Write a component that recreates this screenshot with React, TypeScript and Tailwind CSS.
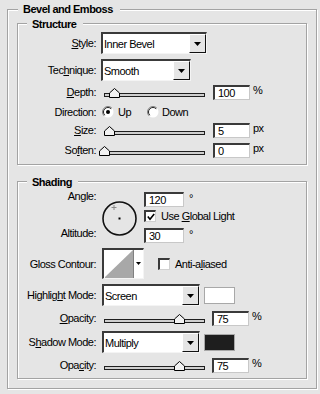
import React from "react";

const BG = "bg-[#e5e5e5]";
const SUNK =
  "border-t-2 border-l-2 border-b border-r border-t-[#3a3a3a] border-l-[#3a3a3a] border-b-[#f4f4f4] border-r-[#f4f4f4]";

function U({ children }: { children: React.ReactNode }) {
  return <span className="underline">{children}</span>;
}

function Group({
  title,
  className,
  titleClass,
  children,
}: {
  title: string;
  className: string;
  titleClass: string;
  children?: React.ReactNode;
}) {
  return (
    <div
      className={`border border-[#a3a3a3] shadow-[inset_1px_1px_0_#ffffff,1px_1px_0_#ffffff] ${className}`}
    >
      <div className={`w-fit ${BG} font-bold leading-[12px] ${titleClass}`}>{title}</div>
      {children}
    </div>
  );
}

function Label({ children }: { children: React.ReactNode }) {
  return <div className="w-[78px] shrink-0 text-right leading-[12px]">{children}</div>;
}

function Select({ value, w }: { value: string; w: string }) {
  return (
    <div className={`flex h-[22px] ${w} ${SUNK} bg-white shrink-0`}>
      <div className="flex-1 pl-[1px] flex items-center leading-[12px]">{value}</div>
      <div className="w-[17px] flex items-center justify-center bg-[#e5e5e5] border border-t-white border-l-white border-b-[#111111] border-r-[#111111]">
        <svg width="7" height="4" viewBox="0 0 7 4">
          <polygon points="0,0 7,0 3.5,4" fill="#000" />
        </svg>
      </div>
    </div>
  );
}

function Box({ v, w = "w-[37px]" }: { v: string; w?: string }) {
  return (
    <div
      className={`${w} h-[15px] shrink-0 bg-white border-t-2 border-l-2 border-b border-r border-t-[#3a3a3a] border-l-[#3a3a3a] border-b-[#c8c8c8] border-r-[#c8c8c8] pl-[3px] leading-[12px]`}
    >
      {v}
    </div>
  );
}

function Slider({ pos }: { pos: number }) {
  return (
    <div className="relative w-[101px] h-[10px] flex items-end shrink-0">
      <div className="w-full h-[4px] mb-[1px] border border-[#1e1e1e] bg-[#cfcfcf]" />
      <svg
        className="absolute top-0"
        style={{ left: pos - 5 }}
        width="11"
        height="10"
        viewBox="0 0 11 10"
      >
        <polygon points="5.5,0.5 10.5,5 10.5,9.5 0.5,9.5 0.5,5" fill="#f2f2f2" stroke="#000" />
      </svg>
    </div>
  );
}

function Radio({ on }: { on?: boolean }) {
  return (
    <svg width="12" height="12" viewBox="0 0 12 12" className="shrink-0">
      <circle cx="6" cy="6" r="5.5" fill="#fff" />
      <path d="M2.1 9.9 A5.5 5.5 0 0 1 9.9 2.1" stroke="#808080" fill="none" />
      <path d="M2.8 9.2 A4.5 4.5 0 0 1 9.2 2.8" stroke="#222" fill="none" />
      {on && <circle cx="6" cy="6" r="2" fill="#000" />}
    </svg>
  );
}

function Check({ on }: { on?: boolean }) {
  return (
    <div
      className={`w-[12px] h-[12px] shrink-0 bg-white border-t-2 border-l-2 border-b border-r border-t-[#3a3a3a] border-l-[#3a3a3a] border-b-[#d0d0d0] border-r-[#d0d0d0] flex items-center justify-center`}
    >
      {on && (
        <svg width="8" height="8" viewBox="0 0 8 8">
          <path d="M0.8 3.6 L3 6.2 L7.2 1" stroke="#000" strokeWidth="1.6" fill="none" />
        </svg>
      )}
    </div>
  );
}

function SliderRow({
  label,
  pos,
  v,
  unit,
  boxMl,
  className,
}: {
  label: React.ReactNode;
  pos: number;
  v: string;
  unit: string;
  boxMl: string;
  className: string;
}) {
  return (
    <div className={`flex items-center h-[16px] ${className}`}>
      <Label>{label}</Label>
      <div className="ml-[8px] mt-[2px]">
        <Slider pos={pos} />
      </div>
      <div className={boxMl}>
        <Box v={v} />
      </div>
      <span className="ml-[3px] leading-[12px] self-start">{unit}</span>
    </div>
  );
}

export default function App() {
  return (
    <div
      className={`w-[320px] h-[394px] overflow-hidden ${BG} pt-[9px] pl-[7px] font-['Liberation_Sans',Arial,sans-serif] text-[11px] tracking-[-0.5px] text-black`}
    >
      <Group
        title="Bevel and Emboss"
        className="w-[310px] h-[380px]"
        titleClass="-mt-[7px] ml-[10px] pl-[5px] pr-[7px]"
      >
        <Group
          title="Structure"
          className="ml-[9px] mt-[8px] w-[290px] h-[142px]"
          titleClass="-mt-[6px] ml-[9px] pl-[5px] pr-[7px]"
        >
          <div className="flex items-center mt-[2px] h-[22px]">
            <Label>
              <U>S</U>tyle:
            </Label>
            <div className="ml-[5px]">
              <Select value="Inner Bevel" w="w-[106px]" />
            </div>
          </div>
          <div className="flex items-center mt-[5px] h-[22px]">
            <Label>
              Tec<U>h</U>nique:
            </Label>
            <div className="ml-[5px]">
              <Select value="Smooth" w="w-[90px]" />
            </div>
          </div>
          <SliderRow
            className="mt-[3px]"
            label={
              <>
                <U>D</U>epth:
              </>
            }
            pos={10}
            v="100"
            unit="%"
            boxMl="ml-[8px]"
          />
          <div className="flex items-center mt-[4px] h-[16px]">
            <Label>Direction:</Label>
            <div className="ml-[6px] flex items-center">
              <Radio on />
              <span className="ml-[4px] leading-[12px] w-[29px]">Up</span>
              <Radio />
              <span className="ml-[3px] leading-[12px]">Down</span>
            </div>
          </div>
          <SliderRow
            className="mt-[2px]"
            label={
              <>
                <U>S</U>ize:
              </>
            }
            pos={5}
            v="5"
            unit="px"
            boxMl="ml-[8px]"
          />
          <SliderRow
            className="mt-[4px]"
            label={
              <>
                So<U>f</U>ten:
              </>
            }
            pos={0}
            v="0"
            unit="px"
            boxMl="ml-[8px]"
          />
        </Group>

        <Group
          title="Shading"
          className="ml-[9px] mt-[16px] w-[290px] h-[198px]"
          titleClass="-mt-[6px] ml-[9px] pl-[5px] pr-[6px]"
        >
          <div className="flex mt-[4px] h-[52px]">
            <div className="w-[78px] shrink-0 text-right leading-[12px]">
              <div className="-mt-[2px]">
                An<U>g</U>le:
              </div>
              <div className="mt-[25px]">Altitude:</div>
            </div>
            <svg className="ml-[5px] mt-[8px] shrink-0" width="36" height="36" viewBox="0 0 36 36">
              <circle cx="18.5" cy="18.5" r="16.5" stroke="#111" strokeWidth="1.6" fill="none" />
              <rect x="17.5" y="17.5" width="2" height="2" fill="#000" />
              <line x1="10.5" y1="7.5" x2="15.5" y2="7.5" stroke="#8a8a8a" />
              <line x1="13" y1="5" x2="13" y2="10" stroke="#8a8a8a" />
            </svg>
            <div className="ml-[7px] flex flex-col">
              <div className="flex">
                <Box v="120" w="w-[40px]" />
                <span className="ml-[5px] leading-[12px]">°</span>
              </div>
              <div className="flex items-center mt-[3px] h-[12px]">
                <Check on />
                <span className="ml-[5px] leading-[12px]">
                  Use <U>G</U>lobal Light
                </span>
              </div>
              <div className="flex mt-[6px]">
                <Box v="30" w="w-[40px]" />
                <span className="ml-[5px] leading-[12px]">°</span>
              </div>
            </div>
          </div>

          <div className="flex items-center mt-[4px] h-[31px]">
            <Label>Gloss Contour:</Label>
            <div className={`ml-[6px] w-[42px] h-[31px] shrink-0 ${SUNK} bg-white`}>
              <svg width="39" height="28" viewBox="0 0 39 28" className="block">
                <polygon points="1,27 29,0 29,28 1,28" fill="#a8a8a8" />
                <line x1="29.5" y1="0" x2="29.5" y2="28" stroke="#808080" />
                <polygon points="32,12 37,12 34.5,15" fill="#000" />
              </svg>
            </div>
            <div className="ml-[14px]">
              <Check />
            </div>
            <span className="ml-[5px] leading-[12px]">
              Anti-a<U>l</U>iased
            </span>
          </div>

          <div className="flex items-center mt-[5px] h-[22px]">
            <Label>
              Highlig<U>h</U>t Mode:
            </Label>
            <div className="ml-[6px]">
              <Select value="Screen" w="w-[98px]" />
            </div>
            <div className="ml-[4px] w-[31px] h-[17px] border border-[#a8a8a8] bg-white" />
          </div>
          <SliderRow
            className="mt-[4px]"
            label={
              <>
                <U>O</U>pacity:
              </>
            }
            pos={75}
            v="75"
            unit="%"
            boxMl="ml-[7px]"
          />
          <div className="flex items-center mt-[5px] h-[22px]">
            <Label>
              S<U>h</U>adow Mode:
            </Label>
            <div className="ml-[6px]">
              <Select value="Multiply" w="w-[98px]" />
            </div>
            <div className="ml-[4px] w-[31px] h-[17px] border border-[#a8a8a8] bg-[#1e1e1e]" />
          </div>
          <SliderRow
            className="mt-[4px]"
            label={
              <>
                Opa<U>c</U>ity:
              </>
            }
            pos={75}
            v="75"
            unit="%"
            boxMl="ml-[7px]"
          />
        </Group>
      </Group>
    </div>
  );
}
